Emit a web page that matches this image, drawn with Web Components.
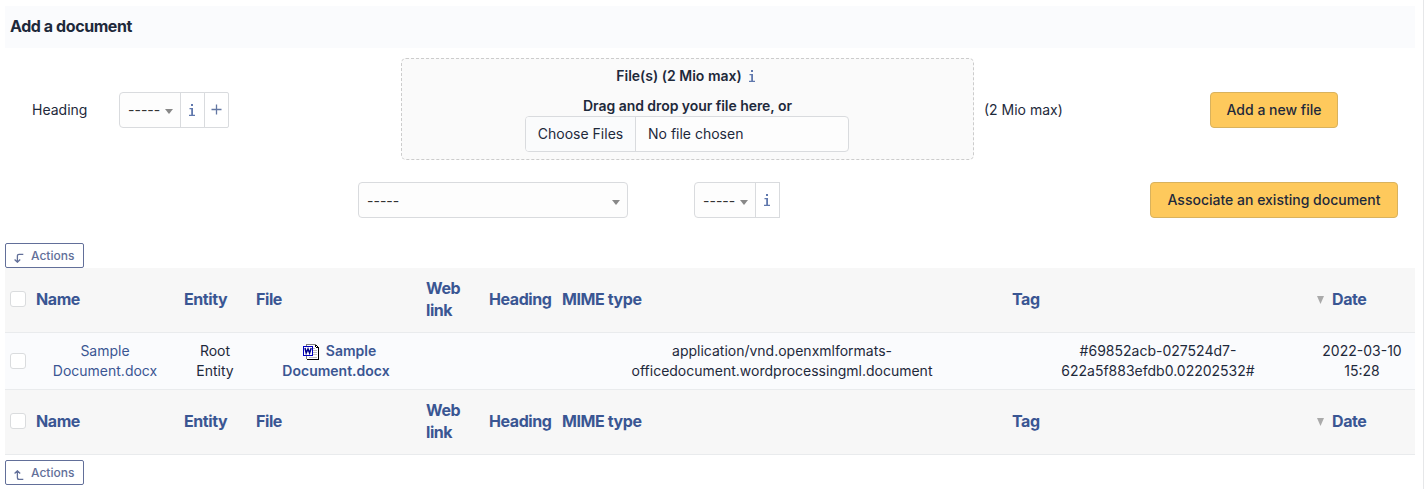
<!DOCTYPE html>
<html lang="en">
<head>
<meta charset="utf-8">
<title>Documents</title>
<style>
body{margin:0;background:#fff;font:14px/20px Inter,"Liberation Sans",sans-serif;color:#1e293b}
</style>
</head>
<body>
<document-page></document-page>
<script>
const define=(name,html)=>{
  const t=document.createElement('template');t.innerHTML=html;
  customElements.define(name,class extends HTMLElement{
    constructor(){super();this.attachShadow({mode:'open'}).append(t.content.cloneNode(true));}
  });
};

define('info-icon',`<style>:host{display:inline-block;width:6px;height:12px;color:#6078ad}svg{display:block}</style>
<svg width="6" height="12" viewBox="0 0 6 12" fill="currentColor"><path d="M2 0h2v2H2zM.5 4H4v6.7h2V12H0v-1.3h2.2V5.3H.5z"/></svg>`);

define('plus-icon',`<style>:host{display:inline-block;width:11px;height:11px;margin-bottom:1px}svg{display:block}</style>
<svg width="11" height="11" viewBox="0 0 11 11" stroke="#6377a3" stroke-width="1.3"><path d="M5.5 .5v10M.5 5.5h10"/></svg>`);

define('arrow-down-icon',`<style>:host{display:block;width:10px;height:10px}svg{display:block}</style>
<svg width="10" height="10" viewBox="0 0 10 10" fill="none" stroke="#626f99" stroke-width="1.3"><path d="M9.3 1.4H5Q3.4 1.4 3.4 3v6M.6 6.6l2.8 2.6 2.8-2.6"/></svg>`);

define('arrow-up-icon',`<style>:host{display:block;width:10px;height:10px}svg{display:block}</style>
<svg width="10" height="10" viewBox="0 0 10 10" fill="none" stroke="#626f99" stroke-width="1.3"><path d="M9.3 9.4H5Q3.4 9.4 3.4 7.6V1M.6 3.4L3.4.8l2.8 2.6"/></svg>`);

define('word-icon',`<style>:host{display:inline-block;width:16px;height:16px;vertical-align:-4px}svg{display:block}</style>
<svg width="16" height="16" viewBox="0 0 16 16" shape-rendering="crispEdges"><path fill="#fff" d="M3 0h10v1h1v1h1v13H3z"/><path fill="#808080" d="M3 0h10v1H3zM3 1h1v14H3z"/><path fill="#c0c0c0" d="M10 4h2v1h-2zM10 6h4v1h-4zM10 8h4v1h-4zM10 10h4v1h-4zM6 13h8v1H6z"/><path fill="#000" d="M13 1h1v1h-1zM14 2h1v1h-1zM12 1h1v2h-1zM13 3h2v1h-2zM15 3h1v12h-1zM4 15h12v1H4z"/><path fill="#0000bf" d="M0 2h10v10H0z"/><path fill="#fff" d="M1 3h8v8H1z"/><path shape-rendering="auto" fill="none" stroke="#00008b" stroke-width="1.5" d="M2 4l1.2 5L5 5l1.6 4L8.2 4"/></svg>`);

define('select-box',`<style>:host{display:flex;box-sizing:border-box;height:36px;border:1px solid #d9dbde;border-radius:4px;background:#fdfdfd;align-items:center;justify-content:space-between;padding:0 7px 0 8px;color:#333}
i{border:solid transparent;border-width:5px 4px 0;border-top-color:#888;margin-top:4px}span{padding-top:1px}</style>
<span><slot></slot></span><i></i>`);

define('addon-box',`<style>:host{display:flex;box-sizing:border-box;width:25px;height:36px;margin-left:-1px;border:1px solid #d9dbde;align-items:center;justify-content:center;background:#fff}::slotted(info-icon){margin:0 1px 0 0}</style><slot></slot>`);

define('input-group',`<style>:host{display:flex}::slotted(select-box){width:62px;border-radius:4px 0 0 4px}</style><slot></slot>`);

define('primary-button',`<style>:host{display:block}button{display:block;box-sizing:border-box;height:36px;width:100%;padding:0;border:1px solid #d9b25d;border-radius:4px;background:#fec95c;color:#1e293b;font:500 14px/20px Inter,sans-serif}</style><button><slot></slot></button>`);

define('drop-zone',`<style>:host{display:flex;flex-direction:column;align-items:center;box-sizing:border-box;height:102px;border:1px dashed #ccc;border-radius:5px;background:#fafafa;padding:7px 1px 0 0}
b{font-weight:600;display:flex;align-items:center;gap:7px;height:20px}.title{padding-right:3px}.hint{margin-top:10px;letter-spacing:-.05px;padding-left:1px}
.file{display:flex;box-sizing:border-box;width:324px;height:36px;border:1px solid #d9dbde;border-radius:4px;background:#fdfdfd;overflow:hidden;line-height:34px}
.choose{width:109px;border-right:1px solid #d9dbde;background:#fafbfc;text-align:center}.none{padding-left:12px}</style>
<b class="title"><span>File(s) (2 Mio max)</span><info-icon></info-icon></b><b class="hint">Drag and drop your file here, or</b>
<div class="file"><span class="choose">Choose Files</span><span class="none">No file chosen</span></div>`);

define('document-form',`<style>:host{display:block}
h2{margin:0;height:42px;box-sizing:border-box;padding:0 5px;background:#fafbfd;font:700 16px/41px Inter,sans-serif;letter-spacing:-.42px}
.row{display:grid;align-items:center}
.first{grid-template-columns:114px 282px 573px 236px 128px;height:123px;padding-bottom:1px;box-sizing:border-box}
.first>:first-child{padding-left:27px}.max{padding-left:10px}.first>input-group,.first>primary-button,.first>span{margin-top:1px}
.second{grid-template-columns:336px 456px 248px;padding:0 17px 0 353px;height:58px;box-sizing:border-box}
.wide{width:270px}
.last{border-radius:0 2px 2px 0}</style>
<h2>Add a document</h2>
<div class="row first"><span>Heading</span><input-group><select-box>-----</select-box><addon-box><info-icon></info-icon></addon-box><addon-box class="last"><plus-icon></plus-icon></addon-box></input-group><drop-zone></drop-zone><span class="max">(2 Mio max)</span><primary-button>Add a new file</primary-button></div>
<div class="row second"><select-box class="wide">-----</select-box><input-group><select-box>-----</select-box><addon-box><info-icon></info-icon></addon-box></input-group><primary-button>Associate an existing document</primary-button></div>`);

define('actions-button',`<style>:host{display:block}button{display:flex;align-items:center;box-sizing:border-box;width:79px;height:25px;padding:0 0 0 8px;gap:7px;background:#fff;border:1px solid #626f99;border-radius:2px;color:#626f99;font:500 12px/18px Inter,sans-serif}::slotted(*){margin-top:4px}</style><button><slot name="icon"></slot><span>Actions</span></button>`);

define('check-box',`<style>:host{display:block;box-sizing:border-box;width:16px;height:16px;border:1px solid #dadcde;border-radius:3px;background:#fff}</style>`);

define('table-row',`<style>:host{display:grid;grid-template-columns:26px 148px 72px 170px 63px 73px 450px 302px 106px;align-items:center;box-sizing:border-box;height:57px;border-bottom:1px solid #e9ebed;background:#fafbfd;text-align:center}
::slotted(*){margin:0 5px}</style><slot></slot>`);

define('heading-row',`<style>table-row{height:65px;padding-bottom:2px;background:#f7f7f7;color:#3a5693;font:700 16px/22px Inter,sans-serif;letter-spacing:-.42px;text-align:left}
:host{display:block}span{white-space:nowrap}.date{display:flex;align-items:center;padding-left:3px;gap:8px}svg{display:block;margin-top:2px}</style>
<table-row><check-box></check-box><span>Name</span><span>Entity</span><span>File</span><span>Web<br>link</span><span>Heading</span><span>MIME type</span><span>Tag</span><span class="date"><svg width="7" height="8" viewBox="0 0 7 8" fill="#aaa"><path d="M0 0h7L3.5 8z"/></svg>Date</span></table-row>`);

define('document-table',`<style>:host{display:block}a{color:#3a5693}.f{font-weight:600}word-icon{margin:0 7px}</style>
<heading-row></heading-row>
<table-row><check-box></check-box><a>Sample<br>Document.docx</a><span>Root<br>Entity</span><a class="f"><word-icon></word-icon>Sample<br>Document.docx</a><span></span><span></span><span>application/vnd.openxmlformats-<br>officedocument.wordprocessingml.document</span><span>#69852acb-027524d7-<br>622a5f883efdb0.02202532#</span><span>2022-03-10<br>15:28</span></table-row>
<heading-row></heading-row>`);

define('document-page',`<style>:host{display:block;box-sizing:border-box;height:489px;padding:6px 8px 0 5px;border-right:1px solid #e6e7e9;overflow:hidden}
.top{margin-top:14px}.bottom{margin-top:5px}</style>
<document-form></document-form>
<actions-button class="top"><arrow-down-icon slot="icon"></arrow-down-icon></actions-button>
<document-table></document-table>
<actions-button class="bottom"><arrow-up-icon slot="icon"></arrow-up-icon></actions-button>`);
</script>
</body>
</html>
